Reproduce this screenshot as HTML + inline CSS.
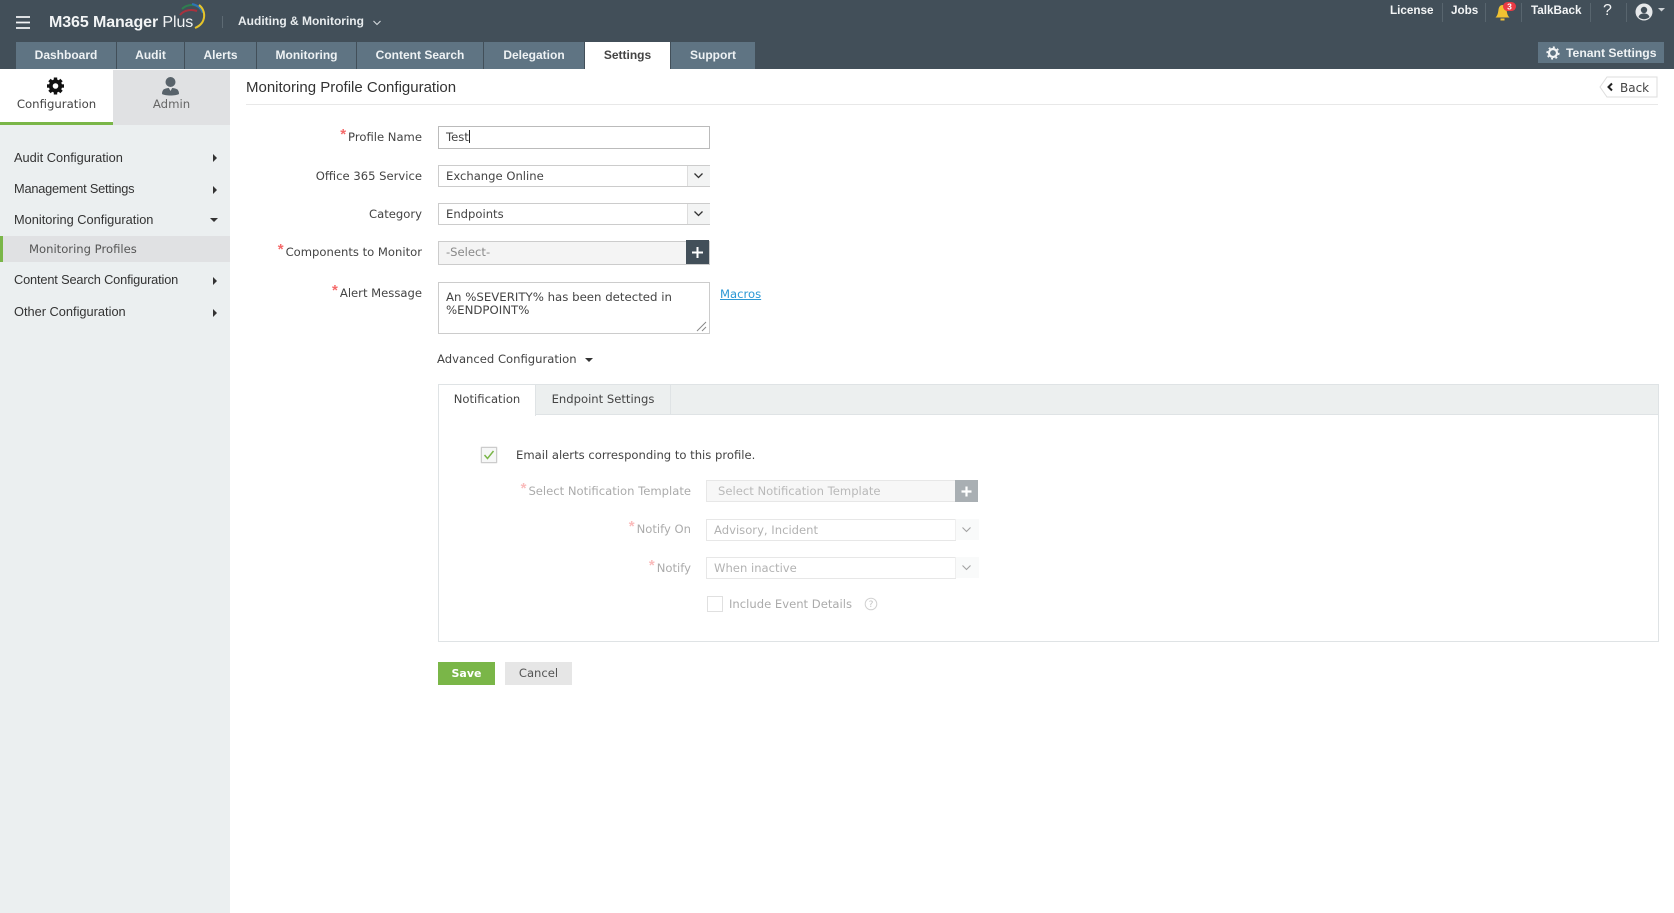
<!DOCTYPE html>
<html><head><meta charset="utf-8"><style>
html,body{margin:0;padding:0;width:1674px;height:913px;overflow:hidden;background:#fff}
body{position:relative;font-family:"DejaVu Sans",sans-serif;font-size:11.6px;color:#444}
.a{position:absolute;white-space:nowrap}
.ls{font-family:"Liberation Sans",sans-serif}
.tab{position:absolute;top:42px;height:27px;line-height:27px;background:#5f7483;color:#eef2f4;text-align:center;font-weight:bold;font-family:"Liberation Sans",sans-serif;font-size:12px}
.sep{position:absolute;top:3px;width:1px;height:19px;background:#58656e}
.tn{position:absolute;top:3px;color:#f3f5f6;font-family:"Liberation Sans",sans-serif;font-weight:bold;font-size:11.7px;line-height:16px;white-space:nowrap}
.m{position:absolute;left:14px;font-family:"Liberation Sans",sans-serif;font-size:12.8px;color:#333;line-height:16px;white-space:nowrap}
.ar{position:absolute;left:213px;width:0;height:0;border-left:4px solid #333;border-top:4px solid transparent;border-bottom:4px solid transparent}
.lab{position:absolute;right:1252px;text-align:right;white-space:nowrap;line-height:16px;color:#444}
.st{color:#f56a6a;font-size:15px;margin-right:2px;position:relative;top:-2px;font-family:"Liberation Sans",sans-serif;font-weight:bold}
.in{position:absolute;left:438px;width:270px;box-sizing:content-box;border:1px solid #ccc;background:#fff;line-height:20px;text-indent:7px;white-space:nowrap}
.box{position:absolute;background:#f3f4f4;border-left:1px solid #ddd}
.d{opacity:.45}
</style></head><body>
<div class="a" style="left:0;top:0;width:1674px;height:69px;background:#424f59"></div>
<svg class="a" style="left:16px;top:15px" width="15" height="15"><path d="M0 2h14M0 7.500h14M0 13h14" stroke="#f2f4f5" stroke-width="1.800"/></svg>
<div class="a ls" style="left:49px;top:13px;font-size:16px;font-weight:bold;color:#f2f4f5;line-height:20px;letter-spacing:-.1px">M365 Manager <span style="font-weight:normal">Plus</span></div>
<svg class="a" style="left:178px;top:2px" width="30" height="28" fill="none" stroke-width="2"><path d="M2 13C6 8 13 7 19 9" stroke="#a8323e"/><path d="M4 7C8 3 14 2 19 4" stroke="#2f7f4f"/><path d="M14 2C19 3 23 6 25 11" stroke="#2d74b5"/><path d="M21 3C28 8 29 21 17 26" stroke="#e5c42a"/></svg>
<div class="a" style="left:222px;top:16px;width:1px;height:12px;background:#5d6a73"></div>
<div class="a ls" style="left:238px;top:13px;font-size:12px;font-weight:bold;color:#e8ecee;line-height:17px;">Auditing &amp; Monitoring</div>
<svg class="a" style="left:372px;top:19px" width="10" height="8" fill="none"><path d="M1.500 2l3.500 3.500L8.500 2" stroke="#d5dade" stroke-width="1.100"/></svg>

<div class="tab" style="left:16px;width:100px">Dashboard</div>
<div class="tab" style="left:117px;width:67px">Audit</div>
<div class="tab" style="left:185px;width:71px">Alerts</div>
<div class="tab" style="left:257px;width:99px">Monitoring</div>
<div class="tab" style="left:357px;width:126px">Content Search</div>
<div class="tab" style="left:484px;width:100px">Delegation</div>
<div class="tab" style="left:585px;width:85px;background:#fff;color:#444">Settings</div>
<div class="tab" style="left:671px;width:84px">Support</div>

<div class="tn" style="left:1390px">License</div><div class="sep" style="left:1442px"></div>
<div class="tn" style="left:1451px">Jobs</div><div class="sep" style="left:1485px"></div>
<svg class="a" style="left:1494px;top:1px" width="24" height="20"><path d="M1.500 16.500c2-2 2.500-4 3-8 .5-3 2-4.500 4-4.500s3.500 1.500 4 4.500c.5 4 1 6 3 8z M6.500 17.500h4v2h-4z" fill="#f1c232"/><rect x="9" y="1" width="13" height="9" rx="4.500" fill="#ea3b45"/><text x="15.500" y="8.500" font-size="8.500" font-weight="bold" fill="#fff" text-anchor="middle" font-family="Liberation Sans">3</text></svg>
<div class="sep" style="left:1521px"></div>
<div class="tn" style="left:1531px">TalkBack</div><div class="sep" style="left:1590px"></div>
<div class="tn" style="left:1603px;font-size:16px;font-weight:normal;top:3px">?</div><div class="sep" style="left:1626px"></div>
<svg class="a" style="left:1635px;top:2px" width="32" height="20"><circle cx="9" cy="10" r="8.500" fill="#e6e8ea"/><circle cx="9" cy="8" r="3.200" fill="#424f59"/><path d="M3.500 15c1-3 3-3.500 5.500-3.500s4.500.5 5.500 3.500a8 8 0 01-11 0z" fill="#424f59"/><path d="M23 6h7l-3.500 3.500z" fill="#cdd2d6"/></svg>
<div class="a ls" style="left:1538px;top:42px;width:126px;height:21px;background:#5f7483"></div>
<svg class="a" style="left:1546px;top:46px" width="14" height="14" fill="none"><circle cx="7" cy="7" r="4" stroke="#f2f4f5" stroke-width="2.200"/><circle cx="7" cy="7" r="5.800" stroke="#f2f4f5" stroke-width="1.600" stroke-dasharray="2 2.500"/></svg>
<div class="a ls" style="left:1566px;top:45px;font-size:12.200px;font-weight:bold;color:#eef2f4;line-height:16px;">Tenant Settings</div>

<div class="a" style="left:0;top:70px;width:230px;height:843px;background:#ebeff0"></div>
<div class="a" style="left:0;top:70px;width:113px;height:52px;background:#fff"></div>
<div class="a" style="left:0;top:122px;width:113px;height:3px;background:#7ab648"></div>
<div class="a" style="left:113px;top:70px;width:117px;height:55px;background:#e0e1e3"></div>
<svg class="a" style="left:46px;top:77px" width="19" height="18"><g transform="translate(9.500 9)"><circle r="4.700" fill="none" stroke="#111" stroke-width="3.800"/><g stroke="#111" stroke-width="3.400"><path d="M0-5V-8.500"/><path d="M0 5V8.500"/><path d="M5 0H8.500"/><path d="M-5 0H-8.500"/><path d="M3.500-3.500L6-6"/><path d="M-3.500-3.500L-6-6"/><path d="M3.500 3.500L6 6"/><path d="M-3.500 3.500L-6 6"/></g></g></svg>
<div class="a" style="left:0;top:96px;width:113px;text-align:center;line-height:16px;font-size:11.700px;color:#444">Configuration</div>
<svg class="a" style="left:161px;top:76px" width="19" height="20"><circle cx="9.500" cy="6" r="5" fill="#59636b"/><path d="M1 18c0-5 3-6 8.500-6s8.500 1 8.500 6c-3 2-14 2-17 0z" fill="#59636b"/><path d="M7.800 12h3.400L9.500 15z" fill="#e0e1e3"/></svg>
<div class="a" style="left:113px;top:96px;width:117px;text-align:center;line-height:16px;font-size:11.700px;color:#666">Admin</div>

<div class="m" style="top:149.500px">Audit Configuration</div><div class="ar" style="top:154px"></div>
<div class="m" style="top:180.500px;letter-spacing:-.22px">Management Settings</div><div class="ar" style="top:186px"></div>
<div class="m" style="top:212px">Monitoring Configuration</div><div class="a" style="left:210px;top:218px;border-top:4px solid #333;border-left:4px solid transparent;border-right:4px solid transparent"></div>
<div class="a" style="left:0;top:236px;width:230px;height:26px;background:#e0e1e3"></div>
<div class="a" style="left:0;top:236px;width:3px;height:26px;background:#7ab648"></div>
<div class="a" style="left:29px;top:240.500px;line-height:16px;color:#555;font-size:11.600px">Monitoring Profiles</div>
<div class="m" style="top:272px;letter-spacing:-.16px">Content Search Configuration</div><div class="ar" style="top:277px"></div>
<div class="m" style="top:303.500px">Other Configuration</div><div class="ar" style="top:309px"></div>

<div class="a ls" style="left:246px;top:79px;font-size:15px;color:#333;line-height:18px;">Monitoring Profile Configuration</div>
<div class="a" style="left:246px;top:104px;width:1412px;height:1px;background:#e8e8e8"></div>
<svg class="a" style="left:1599px;top:76px" width="60" height="22"><path d="M8 1H58V21H8L1 11z" fill="#fff" stroke="#ddd"/><path d="M13 7.500l-3.500 3.500 3.500 3.500" fill="none" stroke="#222" stroke-width="2"/><text x="21" y="16" font-size="12" fill="#444" font-family="DejaVu Sans">Back</text></svg>

<div class="lab" style="top:129px;right:1252px"><span class="st">*</span>Profile Name</div>
<div class="in" style="top:126px;height:21px;line-height:21px;border-color:#bbb;">Test<span style="display:inline-block;width:1px;height:13px;background:#222;vertical-align:-2px;"></span></div>
<div class="lab" style="top:167.500px">Office 365 Service</div>
<div class="in" style="top:165px;height:20px">Exchange Online</div>
<div class="box" style="left:687px;top:166px;width:22px;height:20px"></div>
<svg class="a" style="left:693px;top:172px" width="12" height="8" fill="none"><path d="M1.500 1.500l4 4 4-4" stroke="#333" stroke-width="1.300"/></svg>
<div class="lab" style="top:206px">Category</div>
<div class="in" style="top:203px;height:20px">Endpoints</div>
<div class="box" style="left:687px;top:204px;width:22px;height:20px"></div>
<svg class="a" style="left:693px;top:210px" width="12" height="8" fill="none"><path d="M1.500 1.500l4 4 4-4" stroke="#333" stroke-width="1.300"/></svg>
<div class="lab" style="top:244px"><span class="st">*</span>Components to Monitor</div>
<div class="in" style="top:241px;height:22px;line-height:21px;background:#f4f4f4;color:#888">-Select-</div>
<div class="a" style="left:686px;top:240px;width:23px;height:24px;background:#424f59"></div>
<svg class="a" style="left:691px;top:246px" width="13" height="13"><path d="M6.500 1v11M1 6.500h11" stroke="#fff" stroke-width="2"/></svg>
<div class="lab" style="top:285px"><span class="st">*</span>Alert Message</div>
<div class="in" style="top:282px;height:50px;line-height:13px;text-indent:0;white-space:normal;font-size:11.750px"><div style="padding:8px 7px;">An %SEVERITY% has been detected in<br>%ENDPOINT%</div></div>
<svg class="a" style="left:695px;top:320px" width="12" height="12"><path d="M2 11L11 2M7 11l4-4" stroke="#888"/></svg>
<div class="a" style="left:720px;top:286px;color:#2b98d5;text-decoration:underline;line-height:16px;">Macros</div>

<div class="a" style="left:437px;top:351px;line-height:16px;">Advanced Configuration</div>
<div class="a" style="left:585px;top:358px;border-top:4px solid #333;border-left:4px solid transparent;border-right:4px solid transparent"></div>

<div class="a" style="left:438px;top:384px;width:1219px;height:256px;border:1px solid #dfe3e5;background:#fff"></div>
<div class="a" style="left:439px;top:385px;width:1219px;height:29px;background:#ecefef;border-bottom:1px solid #dfe3e5"></div>
<div class="a" style="left:439px;top:385px;width:96px;height:31px;background:#fff;border-right:1px solid #dfe3e5;text-align:center;line-height:29px;">Notification</div>
<div class="a" style="left:536px;top:385px;width:134px;height:29px;border-right:1px solid #dfe3e5;text-align:center;line-height:29px;">Endpoint Settings</div>
<div class="a" style="left:481px;top:447px;width:14px;height:14px;border:1px solid #ccc;background:#f6f7f7;box-shadow:0 0 1px #bbb"></div>
<svg class="a" style="left:483px;top:449px" width="12" height="12" fill="none"><path d="M1.500 6l3 3.500L10.500 2" stroke="#7ab648" stroke-width="1.500"/></svg>
<div class="a" style="left:516px;top:447px;line-height:16px;">Email alerts corresponding to this profile.</div>

<div class="d">
<div class="lab" style="top:483px;right:983px"><span class="st">*</span>Select Notification Template</div>
<div class="a" style="left:706px;top:480px;width:248px;height:20px;border:1px solid #ccc;background:#eee;color:#666;line-height:20px;text-indent:11px;">Select Notification Template</div>
<div class="a" style="left:955px;top:480px;width:23px;height:22px;background:#424f59"></div>
<svg class="a" style="left:960px;top:485px" width="13" height="13"><path d="M6.500 1.500v10M1.500 6.500h10" stroke="#fff" stroke-width="2.200"/></svg>
<div class="lab" style="top:521px;right:983px"><span class="st">*</span>Notify On</div>
<div class="a" style="left:706px;top:519px;width:248px;height:20px;border:1px solid #ccc;color:#555;line-height:20px;text-indent:7px;">Advisory, Incident</div>
<div class="box" style="left:955px;top:519px;width:23px;height:21px;background:#f3f4f4"></div>
<svg class="a" style="left:961px;top:526px" width="12" height="8" fill="none"><path d="M1.500 1.500l4 4 4-4" stroke="#333" stroke-width="1.100"/></svg>
<div class="lab" style="top:560px;right:983px"><span class="st">*</span>Notify</div>
<div class="a" style="left:706px;top:557px;width:248px;height:20px;border:1px solid #ccc;color:#555;line-height:20px;text-indent:7px;">When inactive</div>
<div class="box" style="left:955px;top:557px;width:23px;height:21px"></div>
<svg class="a" style="left:961px;top:564px" width="12" height="8" fill="none"><path d="M1.500 1.500l4 4 4-4" stroke="#333" stroke-width="1.100"/></svg>
<div class="a" style="left:707px;top:596px;width:14px;height:14px;border:1px solid #bbb;"></div>
<div class="a" style="left:729px;top:596px;line-height:16px;">Include Event Details</div>
<svg class="a" style="left:864px;top:597px" width="14" height="14"><circle cx="7" cy="7" r="5.800" fill="none" stroke="#999"/><text x="7" y="10" font-size="9" text-anchor="middle" fill="#777" font-family="DejaVu Sans">?</text></svg>
</div>

<div class="a" style="left:438px;top:662px;width:57px;height:23px;background:#7ab648;color:#fff;text-align:center;line-height:23px;font-weight:bold;font-size:11px">Save</div>
<div class="a" style="left:505px;top:662px;width:67px;height:23px;background:#e6e6e6;color:#555;text-align:center;line-height:23px;">Cancel</div>
</body></html>
